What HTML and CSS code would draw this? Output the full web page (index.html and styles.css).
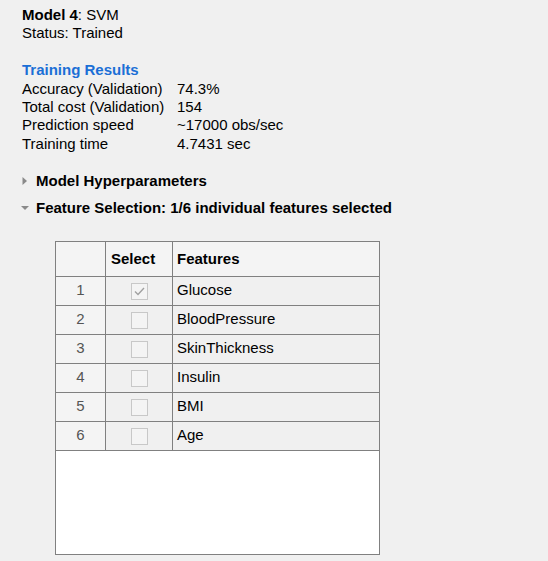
FILE: index.html
```html
<!DOCTYPE html>
<html>
<head>
<meta charset="utf-8">
<link rel="stylesheet" href="styles.css">
</head>
<body>
<div class="page">
  <div class="summary">
    <div><b>Model 4</b>: SVM</div>
    <div>Status: Trained</div>
    <div class="blank">&nbsp;</div>
    <div class="heading">Training Results</div>
    <div class="metrics">
      <span>Accuracy (Validation)</span><span>74.3%</span>
      <span>Total cost (Validation)</span><span>154</span>
      <span>Prediction speed</span><span>~17000 obs/sec</span>
      <span>Training time</span><span>4.7431 sec</span>
    </div>
  </div>
  <div class="section">
    <svg class="tri" width="10" height="10" viewBox="0 0 10 10"><path d="M2.5 1 L7 5 L2.5 9 Z" fill="#8a8a8a"/></svg>
    <span>Model Hyperparameters</span>
  </div>
  <div class="section">
    <svg class="tri" width="10" height="10" viewBox="0 0 10 10"><path d="M1 3 L9 3 L5 7 Z" fill="#8a8a8a"/></svg>
    <span>Feature Selection: 1/6 individual features selected</span>
  </div>
  <div class="table">
    <div class="rowhead">
      <div class="corner"></div>
      <div class="num">1</div>
      <div class="num">2</div>
      <div class="num">3</div>
      <div class="num">4</div>
      <div class="num">5</div>
      <div class="num">6</div>
    </div>
    <div class="body">
      <div class="hrow">
        <div class="hc sel">Select</div>
        <div class="hc feat">Features</div>
      </div>
      <div class="drow"><div class="dc sel"><span class="cb"><svg width="15" height="15" viewBox="0 0 15 15"><path d="M3 7.5 L6 10.5 L12 4" fill="none" stroke="#a0a0a0" stroke-width="1.4"/></svg></span></div><div class="dc feat">Glucose</div></div>
      <div class="drow"><div class="dc sel"><span class="cb"></span></div><div class="dc feat">BloodPressure</div></div>
      <div class="drow"><div class="dc sel"><span class="cb"></span></div><div class="dc feat">SkinThickness</div></div>
      <div class="drow"><div class="dc sel"><span class="cb"></span></div><div class="dc feat">Insulin</div></div>
      <div class="drow"><div class="dc sel"><span class="cb"></span></div><div class="dc feat">BMI</div></div>
      <div class="drow"><div class="dc sel"><span class="cb"></span></div><div class="dc feat">Age</div></div>
    </div>
  </div>
</div>
</body>
</html>
```

FILE: styles.css
```css
html, body {
  margin: 0;
  padding: 0;
  background: #f0f0f0;
}
body {
  font-family: "Liberation Sans", Arial, sans-serif;
  font-size: 15px;
  color: #000;
}
.page {
  padding: 6px 0 0 22px;
}
.summary {
  line-height: 18.4px;
}
.heading {
  color: #1b6fd6;
  font-weight: bold;
}
.metrics {
  display: grid;
  grid-template-columns: 155px auto;
}
.section {
  display: flex;
  align-items: center;
  height: 27px;
  font-weight: bold;
  margin-left: -2px;
}
.summary + .section {
  margin-top: 14px;
}
.tri {
  margin-right: 6px;
  flex: none;
}
.table {
  margin: 20px 0 0 33px;
  width: 323px;
  height: 312px;
  border: 1px solid #808080;
  background: #fff;
  display: flex;
  align-items: flex-start;
}
.rowhead {
  width: 50px;
  flex: none;
  display: flex;
  flex-direction: column;
}
.corner {
  height: 34px;
  background: #f4f4f4;
  border-bottom: 1px solid #808080;
  border-right: 1px solid #808080;
}
.num {
  height: 26px;
  line-height: 26px;
  padding-bottom: 2px;
  text-align: center;
  color: #555;
  background: #f4f4f4;
  border-bottom: 1px solid #808080;
  border-right: 1px solid #808080;
}
.body {
  flex: 1;
  display: flex;
  flex-direction: column;
}
.hrow, .drow {
  display: flex;
}
.hc {
  height: 34px;
  line-height: 34px;
  font-weight: bold;
  background: #f4f4f4;
  border-bottom: 1px solid #808080;
}
.dc {
  height: 28px;
  line-height: 26px;
  background: #f0f0f0;
  border-bottom: 1px solid #808080;
}
.sel {
  width: 66px;
  flex: none;
  border-right: 1px solid #808080;
}
.hc.sel {
  padding-left: 5px;
  width: 61px;
}
.dc.sel {
  display: flex;
  align-items: center;
  justify-content: center;
}
.feat {
  flex: 1;
  padding-left: 4px;
}
.cb {
  width: 15px;
  height: 15px;
  border: 1px solid #c8c8c8;
  background: #f4f4f4;
  display: block;
}
.cb svg {
  display: block;
}
```
